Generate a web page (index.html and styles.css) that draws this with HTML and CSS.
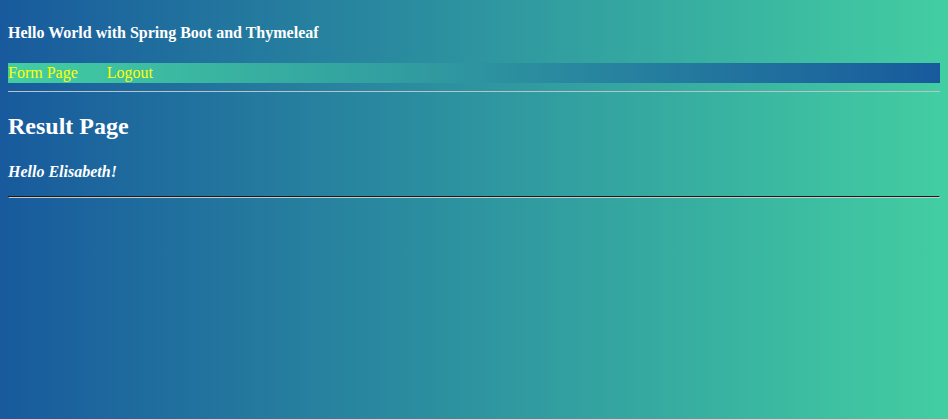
FILE: index.html
```html
<!DOCTYPE html>
<html>
<head>
<meta charset="utf-8">
<title>Result Page</title>
<link rel="stylesheet" href="styles.css">
</head>
<body class="page">
  <h4 class="site-title">Hello World with Spring Boot and Thymeleaf</h4>
  <div class="navbar">
    <a class="nav-link" href="#">Form Page</a>
    <a class="nav-link" href="#">Logout</a>
  </div>
  <hr class="nav-rule">
  <h2 class="page-title">Result Page</h2>
  <p class="greeting"><b><i>Hello Elisabeth!</i></b></p>
  <hr class="end-rule">
</body>
</html>
```

FILE: styles.css
```css
html {
  height: 100%;
}
.page {
  margin: 0;
  padding: 24px 8px 8px;
  box-sizing: border-box;
  min-height: 100%;
  font-family: "Liberation Serif", "Times New Roman", serif;
  font-size: 16px;
  color: #ffffff;
  background: linear-gradient(to right, #185a9d, #43cea2);
  background-attachment: fixed;
}
.site-title {
  font-size: 16px;
  font-weight: bold;
  margin: 0 0 21px;
}
.navbar {
  height: 20px;
  display: flex;
  align-items: center;
  background: linear-gradient(to right, #43cea2, #185a9d);
}
.nav-link {
  color: #ffff00;
  text-decoration: none;
  margin-right: 29px;
  line-height: 20px;
}
.nav-rule {
  margin: 8px 0;
  border: none;
  border-top: 1px solid #b9c3c9;
  height: 0;
}
.page-title {
  font-size: 24px;
  font-weight: bold;
  margin: 21px 0 20px;
}
.greeting {
  margin: 23px 0 15px;
}
.end-rule {
  margin: 8px 0;
  border: 1px inset #9a9a9a;
  border-top-color: #707070;
  border-left-color: #707070;
  border-bottom-color: #c8c8c8;
  border-right-color: #c8c8c8;
}
```
